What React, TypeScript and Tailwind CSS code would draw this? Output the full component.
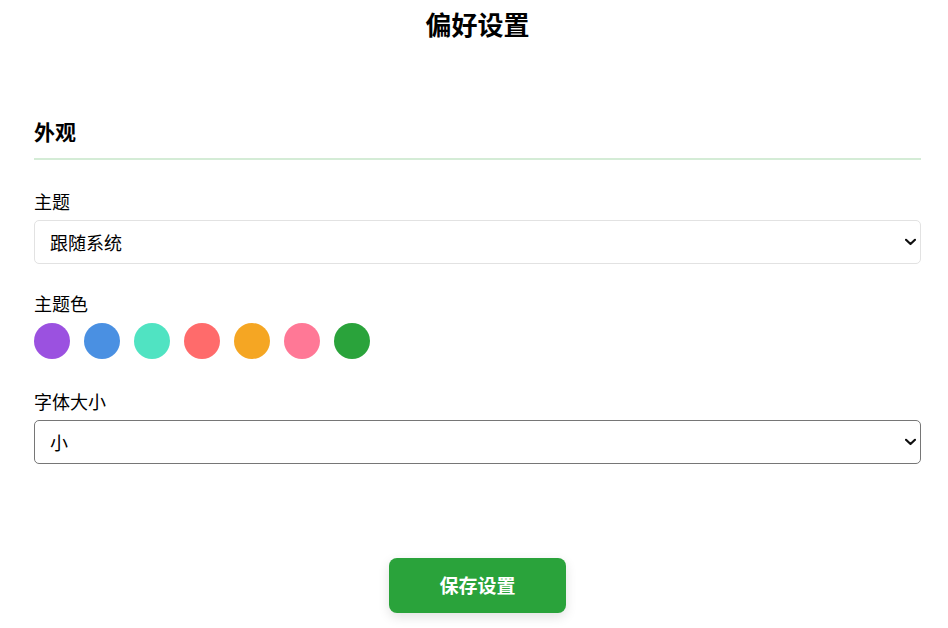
import React, { useState } from "react";

const colors = ["#9b51e0", "#4a90e2", "#50e3c2", "#ff6b6b", "#f5a623", "#ff7896", "#2aa33b"];

const Chevron = () => (
  <svg
    className="pointer-events-none absolute right-[5px] top-1/2 -translate-y-1/2"
    width="11"
    height="7"
    viewBox="0 0 11 7"
    fill="none"
  >
    <path d="M1 1.2 5.5 5.5 10 1.2" stroke="#111" strokeWidth="2.2" strokeLinecap="round" strokeLinejoin="round" />
  </svg>
);

export default function App() {
  const [theme, setTheme] = useState("system");
  const [size, setSize] = useState("small");
  const [accent, setAccent] = useState(colors[6]);

  return (
    <div
      className="min-h-screen bg-white text-black"
      style={{ fontFamily: '"Noto Sans CJK SC", "Noto Sans", sans-serif' }}
    >
      <div className="ml-[34px] mr-[27px]">
        <h1 className="pt-2 text-center text-[26px] font-bold leading-8">偏好设置</h1>

        <h2 className="mt-[77px] border-b-2 border-[#d4ecd6] pb-[13px] text-[21px] font-bold leading-7">外观</h2>

        <label className="mt-[29px] block text-[18px] leading-6">主题</label>
        <div className="relative mt-[7px]">
          <select
            value={theme}
            onChange={(e) => setTheme(e.target.value)}
            className="block h-[44px] w-full appearance-none rounded-[5px] border border-[#e2e2e2] bg-white pl-[15px] pr-6 text-[18px] leading-[42px]"
          >
            <option value="system">跟随系统</option>
            <option value="light">浅色</option>
            <option value="dark">深色</option>
          </select>
          <Chevron />
        </div>

        <label className="mt-[27px] block text-[18px] leading-6">主题色</label>
        <div className="mt-2 flex gap-[14px]">
          {colors.map((c) => (
            <button
              key={c}
              onClick={() => setAccent(c)}
              className="h-[36px] w-[36px] rounded-full"
              style={{ backgroundColor: c }}
              aria-label={c}
              aria-pressed={accent === c}
            />
          ))}
        </div>

        <label className="mt-[30px] block text-[18px] leading-6">字体大小</label>
        <div className="relative mt-[7px]">
          <select
            value={size}
            onChange={(e) => setSize(e.target.value)}
            className="block h-[44px] w-full appearance-none rounded-[5px] border border-[#767676] bg-white pl-[15px] pr-6 text-[18px] leading-[42px]"
          >
            <option value="small">小</option>
            <option value="medium">中</option>
            <option value="large">大</option>
          </select>
          <Chevron />
        </div>

        <div className="mt-[94px] flex justify-center">
          <button className="h-[55px] w-[177px] rounded-lg bg-[#2aa33b] text-[19px] font-bold text-white shadow-[0_4px_12px_rgba(0,0,0,0.12)]">
            保存设置
          </button>
        </div>
      </div>
    </div>
  );
}
